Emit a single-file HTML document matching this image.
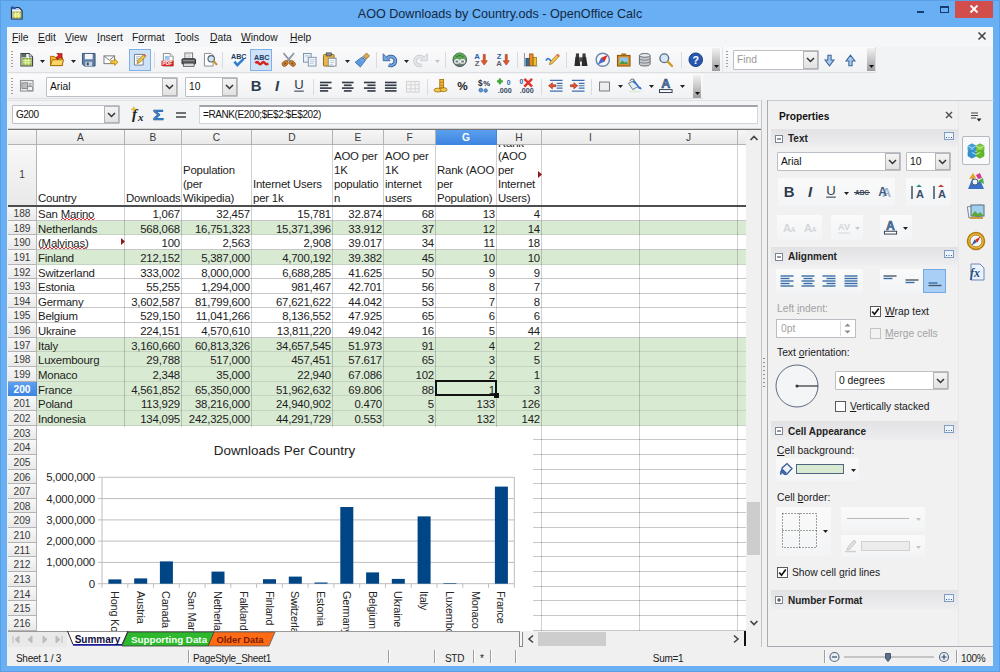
<!DOCTYPE html><html><head><meta charset="utf-8"><title>AOO Downloads by Country.ods - OpenOffice Calc</title><style>
*{box-sizing:border-box;margin:0;padding:0}
html,body{width:1000px;height:672px;overflow:hidden}
body{background:#68aff4;font-family:"Liberation Sans",sans-serif;font-size:12px;color:#000;position:relative}
.abs{position:absolute}
u{text-decoration:underline;text-underline-offset:1px}
#client{position:absolute;left:7px;top:27px;width:986px;height:639px;background:#f0f0f0}
.ui{font-family:"Liberation Sans",sans-serif;font-size:10.3px;color:#1a1a1a;white-space:nowrap}
.cell{position:absolute;font-family:"Liberation Sans",sans-serif;font-size:11.4px;line-height:15px;white-space:nowrap;color:#1c1c1c;letter-spacing:-0.2px}
.hdr{position:absolute;background:linear-gradient(#f8f8f8,#e9e9e9);border-right:1px solid #b4b4b4;border-bottom:1px solid #b4b4b4;font-size:10.2px;color:#3a3a3a;text-align:center;font-family:"Liberation Sans",sans-serif}
</style></head><body>
<div class="abs" style="left:0;top:0;width:1000px;height:26px;text-align:center;font-size:12.6px;line-height:28px;color:#14283f">AOO Downloads by Country.ods - OpenOffice Calc</div>
<div class="abs" style="left:955px;top:1px;width:38px;height:17px;background:#d24e4d"></div>
<svg class="abs" style="left:955px;top:0" width="38" height="18"><path d="M15.5 5.5l7 7M22.5 5.5l-7 7" stroke="#fff" stroke-width="1.8" fill="none"/></svg>
<div class="abs" style="left:940px;top:6px;width:9px;height:7px;border:1px solid #173a6e;border-top-width:2px"></div>
<div class="abs" style="left:917px;top:11px;width:7px;height:2px;background:#173a6e"></div>
<svg class="abs" style="left:10px;top:5px" width="14" height="15"><path d="M1.500 2.500h7.500l3 3v8.500h-10.500z" fill="#f4f6f8" stroke="#1f3048" stroke-width="1.200"/><rect x="3" y="7" width="8" height="6" fill="#d6dc4a" stroke="#5f7a1a" stroke-width=".6"/><path d="M3 9h8M3 11h8M5.600 7v6M8.300 7v6" stroke="#fbfbe0" stroke-width=".7"/><path d="M1.500 1l5 1.500-1 2-4-.5z" fill="#2a5fa5"/><path d="M6 4h3" stroke="#7fa6d8" stroke-width="1"/></svg>
<div class="abs" style="left:0;top:0;width:1000px;height:672px;border:1px solid #5a9ee6;pointer-events:none"></div>
<div id="client"></div>
<div class="abs" style="left:7px;top:27px;width:986px;height:20px;background:#f5f6f7"></div>
<div class="abs ui" style="left:12px;top:30px;line-height:15px"><u>F</u>ile</div>
<div class="abs ui" style="left:38px;top:30px;line-height:15px"><u>E</u>dit</div>
<div class="abs ui" style="left:65px;top:30px;line-height:15px"><u>V</u>iew</div>
<div class="abs ui" style="left:97px;top:30px;line-height:15px"><u>I</u>nsert</div>
<div class="abs ui" style="left:132px;top:30px;line-height:15px">F<u>o</u>rmat</div>
<div class="abs ui" style="left:175px;top:30px;line-height:15px"><u>T</u>ools</div>
<div class="abs ui" style="left:210px;top:30px;line-height:15px"><u>D</u>ata</div>
<div class="abs ui" style="left:241px;top:30px;line-height:15px"><u>W</u>indow</div>
<div class="abs ui" style="left:290px;top:30px;line-height:15px"><u>H</u>elp</div>
<svg class="abs" style="left:976px;top:30px" width="12" height="12"><path d="M2.5 2.5l7 7M9.5 2.5l-7 7" stroke="#444" stroke-width="1.6" fill="none"/></svg>
<div class="abs" style="left:7px;top:47px;width:986px;height:82px;background:#f2f3f5"></div>
<div class="abs" style="left:8px;top:47px;width:714px;height:26px;background:linear-gradient(#fbfbfc,#f1f2f4);border-bottom:1px solid #dcdee2"></div>
<div class="abs" style="left:722px;top:47px;width:154px;height:26px;background:linear-gradient(#fbfbfc,#f1f2f4);border-bottom:1px solid #dcdee2;border-right:1px solid #dcdee2;border-left:1px solid #e4e5e8"></div>
<div class="abs" style="left:8px;top:74px;width:695px;height:25px;background:linear-gradient(#fbfbfc,#f1f2f4);border-bottom:1px solid #dcdee2"></div>
<div class="abs" style="left:7px;top:100px;width:754px;height:29px;background:#f3f4f6;border-top:1px solid #e1e2e5"></div>
<div class="abs" style="left:11px;top:51px;width:2px;height:1px;background:#9aa0a8"></div><div class="abs" style="left:11px;top:54px;width:2px;height:1px;background:#9aa0a8"></div><div class="abs" style="left:11px;top:57px;width:2px;height:1px;background:#9aa0a8"></div><div class="abs" style="left:11px;top:60px;width:2px;height:1px;background:#9aa0a8"></div><div class="abs" style="left:11px;top:63px;width:2px;height:1px;background:#9aa0a8"></div><div class="abs" style="left:11px;top:66px;width:2px;height:1px;background:#9aa0a8"></div>
<svg class="abs" style="left:19.2px;top:52.2px" width="15.5" height="15.5" viewBox="0 0 16 16" ><path d="M2 1.500h8.500l3.500 3.500v9.500h-12z" fill="#fbfbf6" stroke="#3c4248" stroke-width="1.100"/><path d="M2.500 2h5v3.500h-5z" fill="#5a6a62"/><rect x="4" y="6.500" width="8.500" height="7" fill="#b5d84a" stroke="#56781c" stroke-width=".7"/><path d="M4 8.800h8.500M4 11.100h8.500M6.800 6.500v7M9.700 6.500v7" stroke="#f4fbe0" stroke-width=".7"/><path d="M10.500 1.500v3.500h3.500" fill="#d5d8da" stroke="#3c4248" stroke-width=".7"/></svg>
<svg class="abs" style="left:39.5px;top:59.5px" width="6" height="4"><path d="M0 0h5l-2.500 3z" fill="#222"/></svg>
<svg class="abs" style="left:49.2px;top:52.2px" width="15.5" height="15.5" viewBox="0 0 16 16" ><path d="M1.5 4.5h4l1.5 1.5h7v8h-12.5z" fill="#f2b52c" stroke="#a86e0c"/><path d="M1.5 14l2-6h11.5l-1.5 6z" fill="#fbd566" stroke="#a86e0c"/><path d="M8 1.5h5.5v5.5l-1.8-1.8-2.7 2.7-1.9-1.9 2.7-2.7z" fill="#d9231c" stroke="#8f0f0a" stroke-width=".6"/></svg>
<svg class="abs" style="left:70.5px;top:59.5px" width="6" height="4"><path d="M0 0h5l-2.500 3z" fill="#222"/></svg>
<svg class="abs" style="left:81.2px;top:52.2px" width="15.5" height="15.5" viewBox="0 0 16 16" ><path d="M1.5 1.5h13v13h-11l-2-2z" fill="#5f7fa6" stroke="#38557a"/><rect x="4" y="2" width="8" height="5.5" fill="#f4f6fa"/><rect x="4.5" y="10" width="7" height="4.5" fill="#c9d2e0"/><rect x="6" y="10.8" width="2" height="3" fill="#324a70"/></svg>
<svg class="abs" style="left:103.2px;top:52.2px" width="15.5" height="15.5" viewBox="0 0 16 16" ><rect x="1" y="4" width="11" height="8" fill="#fdfdfd" stroke="#7a7a7a"/><path d="M1 4l5.5 4.5L12 4" fill="none" stroke="#7a7a7a"/><path d="M8 9h4V7l3.5 3.5L12 14v-2H8z" fill="#f5c338" stroke="#a7780c" stroke-width=".7"/></svg>
<div class="abs" style="left:129px;top:49px;width:22px;height:22px;background:#cfe2f8;border:1px solid #7fb0e6"></div>
<svg class="abs" style="left:132.2px;top:52.2px" width="15.5" height="15.5" viewBox="0 0 16 16" ><path d="M2.5 2.5h9v11h-9z" fill="#fff" stroke="#6d7c90"/><path d="M4 5h5M4 7h4M4 9h3" stroke="#9fb0c8"/><path d="M12.5 2l2 2-6.5 7-2.8.9.8-2.9z" fill="#f7c640" stroke="#8a6914" stroke-width=".7"/><path d="M12.5 2l2 2-1 1-2-2z" fill="#e2574c"/></svg>
<div class="abs" style="left:154.0px;top:52px;width:1px;height:16px;background:#d9dbdf"></div>
<svg class="abs" style="left:160.2px;top:52.2px" width="15.5" height="15.5" viewBox="0 0 16 16" ><path d="M3.5 1.5h7l3 3v10h-10z" fill="#fff" stroke="#8a8a8a"/><rect x="5" y="4" width="5" height="4" fill="#9cc4e8"/><rect x="1.5" y="9" width="12.5" height="5.5" fill="#d8251f"/><text x="7.7" y="13.6" font-size="5" font-weight="bold" fill="#fff" text-anchor="middle" font-family="Liberation Sans, sans-serif">PDF</text><path d="M10.5 1.5v3h3" fill="#e9e9e9" stroke="#8a8a8a" stroke-width=".7"/></svg>
<svg class="abs" style="left:181.2px;top:52.2px" width="15.5" height="15.5" viewBox="0 0 16 16" ><rect x="4" y="1" width="8" height="6" fill="#fff" stroke="#777"/><path d="M5.5 3h5M5.5 5h5" stroke="#999" stroke-width=".7"/><rect x="1" y="7" width="14" height="5.5" rx="1" fill="#55585c" stroke="#2e3033"/><rect x="2.5" y="11.5" width="11" height="3.5" fill="#d9d9d9" stroke="#444" stroke-width=".7"/><rect x="2" y="8.2" width="12" height="1.3" fill="#8c8f93"/></svg>
<svg class="abs" style="left:202.2px;top:52.2px" width="15.5" height="15.5" viewBox="0 0 16 16" ><path d="M2.5 1.5h7l2 2v11h-9z" fill="#fff" stroke="#8a8a8a"/><circle cx="9.5" cy="7" r="3.3" fill="#cfe6fa" stroke="#55606b" stroke-width="1.2"/><path d="M12 9.5l3 3.2" stroke="#c58b1f" stroke-width="2" stroke-linecap="round"/></svg>
<div class="abs" style="left:222.0px;top:52px;width:1px;height:16px;background:#d9dbdf"></div>
<svg class="abs" style="left:231.2px;top:52.2px" width="15.5" height="15.5" viewBox="0 0 16 16" ><text x="8" y="6.8" font-size="7.4" font-weight="bold" fill="#1f3a60" text-anchor="middle" font-family="Liberation Sans, sans-serif">ABC</text><path d="M3.5 10l3 3.5 6.5-6.5" fill="none" stroke="#2f7fd0" stroke-width="2.6"/></svg>
<div class="abs" style="left:250px;top:49px;width:22px;height:22px;background:#cfe2f8;border:1px solid #7fb0e6"></div>
<svg class="abs" style="left:254.2px;top:52.2px" width="15.5" height="15.5" viewBox="0 0 16 16" ><text x="8" y="7.8" font-size="7.4" font-weight="bold" fill="#1f3a60" text-anchor="middle" font-family="Liberation Sans, sans-serif">ABC</text><path d="M1.5 11.5q1.800-2.500 3.300 0t3.200 0 3.200 0 3.300 0" fill="none" stroke="#d4221c" stroke-width="2.6"/></svg>
<svg class="abs" style="left:281.2px;top:52.2px" width="15.5" height="15.5" viewBox="0 0 16 16" ><path d="M2.500 1l7 8.500M13.500 1l-7 8.500" stroke="#8f99a4" stroke-width="1.900" fill="none"/><ellipse cx="4.300" cy="11.800" rx="3.500" ry="2.500" fill="#cf8530" stroke="#94591a" stroke-width=".8" transform="rotate(-40 4.300 11.800)"/><ellipse cx="11.700" cy="11.800" rx="3.500" ry="2.500" fill="#cf8530" stroke="#94591a" stroke-width=".8" transform="rotate(40 11.700 11.800)"/><ellipse cx="4.300" cy="12" rx="1.300" ry=".8" fill="#7a4a18" transform="rotate(-40 4.300 12)"/><ellipse cx="11.700" cy="12" rx="1.300" ry=".8" fill="#7a4a18" transform="rotate(40 11.700 12)"/></svg>
<svg class="abs" style="left:302.2px;top:52.2px" width="15.5" height="15.5" viewBox="0 0 16 16" ><rect x="1.5" y="1.5" width="8" height="9" fill="#e8f0f8" stroke="#7f94ad"/><rect x="6.5" y="5.5" width="8" height="9" fill="#f4f8fc" stroke="#7f94ad"/><path d="M8 8h5M8 10h5M8 12h4M3 4h5" stroke="#a9bbd1" stroke-width=".8"/></svg>
<svg class="abs" style="left:322.2px;top:52.2px" width="15.5" height="15.5" viewBox="0 0 16 16" ><rect x="1.5" y="2.5" width="11" height="12" rx="1" fill="#e9b64a" stroke="#946717"/><rect x="4.5" y="1" width="5" height="3" fill="#8e9399" stroke="#555"/><rect x="6.5" y="6.5" width="8" height="8" fill="#fff" stroke="#7f8d9c"/><path d="M8 9h5M8 11h5M8 13h3" stroke="#a9bbd1" stroke-width=".8"/></svg>
<svg class="abs" style="left:344.5px;top:59.5px" width="6" height="4"><path d="M0 0h5l-2.500 3z" fill="#222"/></svg>
<svg class="abs" style="left:355.2px;top:52.2px" width="15.5" height="15.5" viewBox="0 0 16 16" ><path d="M12 1l3 3-3.500 3.500-3-3z" fill="#d9a658" stroke="#8a5f1e" stroke-width=".7"/><path d="M8.500 4.500l3 3-1.300 1.300-3-3z" fill="#aab4c0" stroke="#5a6878" stroke-width=".6"/><path d="M7 5.500l3.500 3.500-5 6.500-5.300-5z" fill="#67a6ea" stroke="#2a5f9e" stroke-width=".8"/><path d="M2 12l3.500-3.500M3.500 13.500l3.500-3.500" stroke="#2f68ac" stroke-width=".7"/></svg>
<div class="abs" style="left:376.0px;top:52px;width:1px;height:16px;background:#d9dbdf"></div>
<svg class="abs" style="left:382.2px;top:52.2px" width="15.5" height="15.5" viewBox="0 0 16 16" ><path d="M5.500 6.500a4.600 4.600 0 1 1 1.500 6.800" stroke="#2a5590" stroke-width="3.800" fill="none"/><path d="M1.200 1.800v7.200h7.200z" fill="#72a6de" stroke="#2a5590" stroke-width=".8"/><path d="M5.500 6.500a4.600 4.600 0 1 1 1.500 6.800" stroke="#72a6de" stroke-width="2.300" fill="none"/></svg>
<svg class="abs" style="left:403.5px;top:59.5px" width="6" height="4"><path d="M0 0h5l-2.500 3z" fill="#222"/></svg>
<svg class="abs" style="left:413.2px;top:52.2px" width="15.5" height="15.5" viewBox="0 0 16 16" ><g transform="translate(16 0) scale(-1 1)"><path d="M5.500 6.500a4.600 4.600 0 1 1 1.500 6.800" stroke="#c3c8ce" stroke-width="3.800" fill="none"/><path d="M1.200 1.800v7.200h7.200z" fill="#e3e6ea" stroke="#c3c8ce" stroke-width=".8"/><path d="M5.500 6.500a4.600 4.600 0 1 1 1.500 6.800" stroke="#e3e6ea" stroke-width="2.300" fill="none"/></g></svg>
<svg class="abs" style="left:434.5px;top:59.5px" width="6" height="4"><path d="M0 0h5l-2.500 3z" fill="#c4c4c4"/></svg>
<div class="abs" style="left:445.0px;top:52px;width:1px;height:16px;background:#d9dbdf"></div>
<svg class="abs" style="left:451.8px;top:52.2px" width="15.5" height="15.5" viewBox="0 0 16 16" ><circle cx="8" cy="8" r="7" fill="#6d7f7c" stroke="#34443f" stroke-width=".9"/><path d="M1.300 7.500a6.700 6.700 0 0 1 13.400 0z" fill="#5ca653"/><path d="M4 5q4-3 8 0" stroke="#2f6a2c" stroke-width=".8" fill="none"/><rect x="2.800" y="8" width="4.800" height="3.600" rx="1.700" fill="none" stroke="#eef2f0" stroke-width="1.300"/><rect x="8.400" y="8" width="4.800" height="3.600" rx="1.700" fill="none" stroke="#eef2f0" stroke-width="1.300"/><path d="M6.500 9.800h3" stroke="#eef2f0" stroke-width="1.200"/></svg>
<svg class="abs" style="left:473.2px;top:52.2px" width="15.5" height="15.5" viewBox="0 0 16 16" ><text x="4.300" y="7.200" font-size="8" font-weight="bold" fill="#2b62ad" text-anchor="middle" font-family="Liberation Sans, sans-serif">A</text><text x="4.300" y="14.800" font-size="8" font-weight="bold" fill="#5a6068" text-anchor="middle" font-family="Liberation Sans, sans-serif">Z</text><path d="M10.600 2.500h2v6.500h2.100l-3.100 4.500-3.100-4.500h2.100z" fill="#e5582c" stroke="#a83a14" stroke-width=".7"/></svg>
<svg class="abs" style="left:495.2px;top:52.2px" width="15.5" height="15.5" viewBox="0 0 16 16" ><text x="4.300" y="7.200" font-size="8" font-weight="bold" fill="#2b62ad" text-anchor="middle" font-family="Liberation Sans, sans-serif">Z</text><text x="4.300" y="14.800" font-size="8" font-weight="bold" fill="#5a6068" text-anchor="middle" font-family="Liberation Sans, sans-serif">A</text><path d="M10.600 2.500h2v6.500h2.100l-3.100 4.500-3.100-4.500h2.100z" fill="#e5582c" stroke="#a83a14" stroke-width=".7"/></svg>
<div class="abs" style="left:517.0px;top:52px;width:1px;height:16px;background:#d9dbdf"></div>
<svg class="abs" style="left:523.2px;top:52.2px" width="15.5" height="15.5" viewBox="0 0 16 16" ><path d="M1.500 1v13.500h13.500" stroke="#8a929c" fill="none"/><rect x="3" y="6.500" width="3.600" height="7.500" fill="#2f6f9a" stroke="#173f5c" stroke-width=".7"/><rect x="6.800" y="2" width="3.600" height="12" fill="#f08a24" stroke="#8a4508" stroke-width=".7"/><rect x="10.600" y="5.500" width="3.400" height="8.500" fill="#efc42a" stroke="#8a6c0c" stroke-width=".7"/></svg>
<svg class="abs" style="left:544.8px;top:52.2px" width="15.5" height="15.5" viewBox="0 0 16 16" ><path d="M1 9q2-4 4-1t4 0" fill="none" stroke="#3f7fd0" stroke-width="1.800"/><path d="M13 2l2 2-7.500 8-3 1 1-3z" fill="#f4c04a" stroke="#9a6c16" stroke-width=".7"/><path d="M13 2l2 2-1.200 1.200-2-2z" fill="#e86a5a"/></svg>
<div class="abs" style="left:566.0px;top:52px;width:1px;height:16px;background:#d9dbdf"></div>
<svg class="abs" style="left:573.2px;top:52.2px" width="15.5" height="15.5" viewBox="0 0 16 16" ><path d="M2.500 5h4l1 9.500h-6z" fill="#2a2a2a"/><path d="M9.500 5h4l1.500 9.500h-6z" fill="#2a2a2a"/><rect x="3" y="1.500" width="3.200" height="4" fill="#3a3a3a"/><rect x="9.800" y="1.500" width="3.200" height="4" fill="#3a3a3a"/><rect x="6.500" y="5.500" width="3" height="4.500" fill="#4a4a4a"/></svg>
<svg class="abs" style="left:594.8px;top:52.2px" width="15.5" height="15.5" viewBox="0 0 16 16" ><circle cx="8" cy="8" r="6.800" fill="#f3f6fb" stroke="#7088b0" stroke-width="1.500"/><path d="M13 3l-3.200 7-3.800-3.800z" fill="#dc2a20"/><path d="M3 13l3.200-7 3.800 3.800z" fill="#3f6fc4"/></svg>
<svg class="abs" style="left:616.2px;top:52.2px" width="15.5" height="15.5" viewBox="0 0 16 16" ><rect x="1.500" y="3.500" width="13" height="11" fill="#d98a1e" stroke="#8a5208"/><rect x="3.500" y="5.500" width="9" height="7" fill="#8fc6ee"/><path d="M3.500 12.500l3-4 2.500 2.500 1.500-1.500 2 3z" fill="#4d9a3a"/><rect x="5.500" y="1.500" width="5" height="2" fill="#b0720f"/></svg>
<svg class="abs" style="left:637.2px;top:52.2px" width="15.5" height="15.5" viewBox="0 0 16 16" ><path d="M2.500 3.500v9q0 2 5.500 2t5.500-2v-9" fill="#c9cdd2" stroke="#62676d"/><ellipse cx="8" cy="3.500" rx="5.500" ry="2" fill="#e9ecef" stroke="#62676d"/><path d="M2.500 6.500q0 2 5.500 2t5.500-2M2.500 9.500q0 2 5.500 2t5.500-2" fill="none" stroke="#62676d" stroke-width=".8"/></svg>
<svg class="abs" style="left:658.2px;top:52.2px" width="15.5" height="15.5" viewBox="0 0 16 16" ><circle cx="6.500" cy="6.500" r="4.500" fill="#d4e8fa" stroke="#5a6f86" stroke-width="1.400"/><path d="M10 10l4.500 4.500" stroke="#d19a26" stroke-width="2.400" stroke-linecap="round"/></svg>
<div class="abs" style="left:680.5px;top:52px;width:1px;height:16px;background:#d9dbdf"></div>
<svg class="abs" style="left:687.8px;top:52.2px" width="15.5" height="15.5" viewBox="0 0 16 16" ><circle cx="8" cy="8" r="7" fill="#2758b0" stroke="#153a80"/><text x="8" y="12" font-size="11" font-weight="bold" fill="#fff" text-anchor="middle" font-family="Liberation Sans, sans-serif">?</text></svg>
<div class="abs" style="left:712px;top:48px;width:8px;height:23px;background:linear-gradient(#f2f2f2,#9d9d9d)"></div><svg class="abs" style="left:713.5px;top:65px" width="6" height="4"><path d="M0 0h5l-2.500 3z" fill="#111"/></svg>
<div class="abs" style="left:726px;top:51px;width:2px;height:1px;background:#9aa0a8"></div><div class="abs" style="left:726px;top:54px;width:2px;height:1px;background:#9aa0a8"></div><div class="abs" style="left:726px;top:57px;width:2px;height:1px;background:#9aa0a8"></div><div class="abs" style="left:726px;top:60px;width:2px;height:1px;background:#9aa0a8"></div><div class="abs" style="left:726px;top:63px;width:2px;height:1px;background:#9aa0a8"></div><div class="abs" style="left:726px;top:66px;width:2px;height:1px;background:#9aa0a8"></div>
<div class="abs" style="left:733px;top:50px;width:86px;height:20px;background:#fff;border:1px solid #bcbfc5;border-radius:1px"></div><div class="abs ui" style="left:737px;top:50px;line-height:20px;color:#9a9a9a;font-size:10.3px">Find</div><div class="abs" style="left:803px;top:51px;width:15px;height:18px;background:linear-gradient(#f4f4f4,#e2e2e2);border:1px solid #b4b4b4"></div><svg class="abs" style="left:806.0px;top:57.0px" width="9" height="6"><path d="M1 1l3.500 3.500L8 1" stroke="#333" stroke-width="1.500" fill="none"/></svg>
<svg class="abs" style="left:822.5px;top:53.5px" width="13" height="13" viewBox="0 0 16 16" ><path d="M6 1.500h4v6h3.500l-5.500 7-5.500-7h3.500z" fill="#a9c9ee" stroke="#3d6597" stroke-width="1.300"/></svg>
<svg class="abs" style="left:843.5px;top:53.5px" width="13" height="13" viewBox="0 0 16 16" ><path d="M6 14.500h4v-6h3.500l-5.500-7-5.500 7h3.500z" fill="#a9c9ee" stroke="#3d6597" stroke-width="1.300"/></svg>
<div class="abs" style="left:867px;top:48px;width:8px;height:23px;background:linear-gradient(#f2f2f2,#9d9d9d)"></div><svg class="abs" style="left:868.5px;top:65px" width="6" height="4"><path d="M0 0h5l-2.500 3z" fill="#111"/></svg>
<div class="abs" style="left:11px;top:78px;width:2px;height:1px;background:#9aa0a8"></div><div class="abs" style="left:11px;top:81px;width:2px;height:1px;background:#9aa0a8"></div><div class="abs" style="left:11px;top:84px;width:2px;height:1px;background:#9aa0a8"></div><div class="abs" style="left:11px;top:87px;width:2px;height:1px;background:#9aa0a8"></div><div class="abs" style="left:11px;top:90px;width:2px;height:1px;background:#9aa0a8"></div><div class="abs" style="left:11px;top:93px;width:2px;height:1px;background:#9aa0a8"></div>
<svg class="abs" style="left:19.2px;top:78.2px" width="15.5" height="15.5" viewBox="0 0 16 16" ><rect x="1.500" y="2.500" width="13" height="11" fill="#e8e8e8" stroke="#8a8a8a"/><rect x="3" y="5" width="6" height="6" fill="#b9bcc0" stroke="#6f7276" stroke-width=".7"/><path d="M10 6h3M10 8h3M10 10h3" stroke="#8a8a8a"/><rect x="9" y="9" width="5" height="4" fill="#f5f5f5" stroke="#777" stroke-width=".7"/></svg>
<div class="abs" style="left:46px;top:77px;width:132px;height:20px;background:#fff;border:1px solid #bcbfc5;border-radius:1px"></div><div class="abs ui" style="left:50px;top:77px;line-height:20px;color:#111;font-size:10.3px">Arial</div><div class="abs" style="left:162px;top:78px;width:15px;height:18px;background:linear-gradient(#f4f4f4,#e2e2e2);border:1px solid #b4b4b4"></div><svg class="abs" style="left:165.0px;top:84.0px" width="9" height="6"><path d="M1 1l3.500 3.500L8 1" stroke="#333" stroke-width="1.500" fill="none"/></svg>
<div class="abs" style="left:185px;top:77px;width:53px;height:20px;background:#fff;border:1px solid #bcbfc5;border-radius:1px"></div><div class="abs ui" style="left:189px;top:77px;line-height:20px;color:#111;font-size:10.3px">10</div><div class="abs" style="left:222px;top:78px;width:15px;height:18px;background:linear-gradient(#f4f4f4,#e2e2e2);border:1px solid #b4b4b4"></div><svg class="abs" style="left:225.0px;top:84.0px" width="9" height="6"><path d="M1 1l3.500 3.500L8 1" stroke="#333" stroke-width="1.500" fill="none"/></svg>
<svg class="abs" style="left:249.0px;top:78.2px" width="14" height="14" viewBox="0 0 16 16" ><text x="8" y="14.500" font-size="17" font-weight="bold" fill="#2d3b4e" text-anchor="middle" font-family="Liberation Sans, sans-serif">B</text></svg>
<svg class="abs" style="left:270.0px;top:78.2px" width="14" height="14" viewBox="0 0 16 16" ><text x="8" y="14.500" font-size="17" font-style="italic" font-weight="bold" fill="#2d3b4e" text-anchor="middle" font-family="Liberation Sans, sans-serif">I</text></svg>
<svg class="abs" style="left:292.0px;top:78.2px" width="14" height="14" viewBox="0 0 16 16" ><text x="8" y="12.500" font-size="15" fill="#2d3b4e" text-anchor="middle" font-family="Liberation Sans, sans-serif">U</text><path d="M2.500 15h11" stroke="#2d3b4e" stroke-width="1.200"/></svg>
<div class="abs" style="left:312.5px;top:79px;width:1px;height:16px;background:#d9dbdf"></div>
<svg class="abs" style="left:318.2px;top:79.0px" width="15.5" height="15.5" viewBox="0 0 16 16" ><path d="M2.0 3.6h12.0" stroke="#333b47" stroke-width="1.700"/><path d="M2.0 6.5h8.5" stroke="#333b47" stroke-width="1.700"/><path d="M2.0 9.4h12.0" stroke="#333b47" stroke-width="1.700"/><path d="M2.0 12.3h8.5" stroke="#333b47" stroke-width="1.700"/></svg>
<svg class="abs" style="left:340.2px;top:79.0px" width="15.5" height="15.5" viewBox="0 0 16 16" ><path d="M2.0 3.6h12.0" stroke="#333b47" stroke-width="1.700"/><path d="M4.0 6.5h8.0" stroke="#333b47" stroke-width="1.700"/><path d="M2.0 9.4h12.0" stroke="#333b47" stroke-width="1.700"/><path d="M4.0 12.3h8.0" stroke="#333b47" stroke-width="1.700"/></svg>
<svg class="abs" style="left:361.8px;top:79.0px" width="15.5" height="15.5" viewBox="0 0 16 16" ><path d="M2.0 3.6h12.0" stroke="#333b47" stroke-width="1.700"/><path d="M5.5 6.5h8.5" stroke="#333b47" stroke-width="1.700"/><path d="M2.0 9.4h12.0" stroke="#333b47" stroke-width="1.700"/><path d="M5.5 12.3h8.5" stroke="#333b47" stroke-width="1.700"/></svg>
<svg class="abs" style="left:383.2px;top:79.0px" width="15.5" height="15.5" viewBox="0 0 16 16" ><path d="M2.0 3.6h12.0" stroke="#333b47" stroke-width="1.700"/><path d="M2.0 6.5h12.0" stroke="#333b47" stroke-width="1.700"/><path d="M2.0 9.4h12.0" stroke="#333b47" stroke-width="1.700"/><path d="M2.0 12.3h12.0" stroke="#333b47" stroke-width="1.700"/></svg>
<svg class="abs" style="left:404.8px;top:78.8px" width="15.5" height="15.5" viewBox="0 0 16 16" ><rect x="1.500" y="2.500" width="13" height="11" fill="#f4f4f4" stroke="#cfcfcf"/><path d="M1.500 6h13M1.500 10h13M6 2.500v11M10.500 2.500v11" stroke="#d6d6d6"/></svg>
<div class="abs" style="left:427.0px;top:79px;width:1px;height:16px;background:#d9dbdf"></div>
<svg class="abs" style="left:433.2px;top:78.2px" width="15.5" height="15.5" viewBox="0 0 16 16" ><rect x="7" y="1.500" width="4" height="12" fill="#f2b632" stroke="#9a6a0c" stroke-width=".8"/><ellipse cx="5" cy="12.500" rx="4" ry="2" fill="#f6c84a" stroke="#9a6a0c" stroke-width=".8"/><ellipse cx="11" cy="12" rx="3.500" ry="2" fill="#f6c84a" stroke="#9a6a0c" stroke-width=".8"/><path d="M7 4.500h4M7 7.500h4M7 10h4" stroke="#9a6a0c" stroke-width=".6"/></svg>
<svg class="abs" style="left:455.5px;top:79.5px" width="13" height="13" viewBox="0 0 16 16" ><text x="8" y="12.200" font-size="14.500" font-weight="bold" fill="#1d1d1d" text-anchor="middle" font-family="Liberation Sans, sans-serif">%</text></svg>
<svg class="abs" style="left:476.2px;top:78.2px" width="15.5" height="15.5" viewBox="0 0 16 16" ><text x="4.500" y="8" font-size="8.500" font-weight="bold" fill="#1d2a3a" text-anchor="middle" font-family="Liberation Sans, sans-serif">$</text><text x="11" y="8.500" font-size="8" font-weight="bold" fill="#1d2a3a" text-anchor="middle" font-family="Liberation Sans, sans-serif">%</text><circle cx="5" cy="12.500" r="2" fill="#5b96d8" stroke="#2d5f9e" stroke-width=".7"/><circle cx="10" cy="13" r="1.800" fill="#5b96d8" stroke="#2d5f9e" stroke-width=".7"/></svg>
<svg class="abs" style="left:497.2px;top:78.2px" width="15.5" height="15.5" viewBox="0 0 16 16" ><path d="M3 .5v6M0 3.500h6" stroke="#3fa535" stroke-width="2.400"/><text x="12" y="7.500" font-size="7" font-weight="bold" fill="#2a5fa8" text-anchor="middle" font-family="Liberation Sans, sans-serif">0</text><text x="8" y="15.500" font-size="7.400" font-weight="bold" fill="#3a4a66" text-anchor="middle" font-family="Liberation Sans, sans-serif">.000</text></svg>
<svg class="abs" style="left:519.2px;top:78.2px" width="15.5" height="15.5" viewBox="0 0 16 16" ><path d="M5.500 1l8 8M13.500 1l-8 8" stroke="#e0352b" stroke-width="2.600"/><text x="2.500" y="6.500" font-size="7" font-weight="bold" fill="#2a5fa8" text-anchor="middle" font-family="Liberation Sans, sans-serif">0</text><text x="8" y="15.500" font-size="7.400" font-weight="bold" fill="#3a4a66" text-anchor="middle" font-family="Liberation Sans, sans-serif">.000</text></svg>
<div class="abs" style="left:541.0px;top:79px;width:1px;height:16px;background:#d9dbdf"></div>
<svg class="abs" style="left:547.8px;top:78.2px" width="15.5" height="15.5" viewBox="0 0 16 16" ><path d="M2 2.500h13M9 5.500h6M9 8h6M9 10.500h6M2 13.500h13" stroke="#3f6fb0" stroke-width="1.200"/><path d="M8 7h-3.500v-2.200l-4 3.200 4 3.200v-2.200h3.500z" fill="#e2552c" stroke="#8f2413" stroke-width=".6"/></svg>
<svg class="abs" style="left:569.8px;top:78.2px" width="15.5" height="15.5" viewBox="0 0 16 16" ><path d="M2 2.500h13M9 5.500h6M9 8h6M9 10.500h6M2 13.500h13" stroke="#3f6fb0" stroke-width="1.200"/><path d="M.5 7h3.500v-2.200l4 3.200-4 3.200v-2.200h-3.500z" fill="#e2552c" stroke="#8f2413" stroke-width=".6"/></svg>
<div class="abs" style="left:591.0px;top:79px;width:1px;height:16px;background:#d9dbdf"></div>
<svg class="abs" style="left:598.0px;top:79.5px" width="13" height="13" viewBox="0 0 16 16" ><rect x="2" y="2.500" width="12" height="11" fill="#eeeef2" stroke="#5a5f66" stroke-width="1"/></svg>
<svg class="abs" style="left:618.0px;top:84.5px" width="6" height="4"><path d="M0 0h5l-2.500 3z" fill="#222"/></svg>
<svg class="abs" style="left:626.8px;top:78.2px" width="15.5" height="15.5" viewBox="0 0 16 16" ><path d="M3 3q2-3.500 4.500-1" fill="none" stroke="#6a7480" stroke-width="1.100"/><path d="M1.500 5.500l6-3 4.500 6-6 3.500z" fill="#e6ebf0" stroke="#5b6b7d" stroke-width=".9"/><path d="M7.500 2.500l4.500 6q3 .5 3 3.500-1.500-1-3-1-1.500-4-6.500-7z" fill="#2f6fd0"/><rect x="2" y="13" width="12" height="2" fill="#dfeeda"/></svg>
<svg class="abs" style="left:648.5px;top:84.5px" width="6" height="4"><path d="M0 0h5l-2.500 3z" fill="#222"/></svg>
<svg class="abs" style="left:658.2px;top:78.2px" width="15.5" height="15.5" viewBox="0 0 16 16" ><text x="8" y="10.800" font-size="13" font-weight="bold" fill="#5582b8" stroke="#1f3b63" stroke-width=".55" text-anchor="middle" font-family="Liberation Sans, sans-serif">A</text><rect x="1.500" y="12" width="13" height="3" fill="#fff" stroke="#2a3a50" stroke-width="1"/></svg>
<svg class="abs" style="left:679.5px;top:84.5px" width="6" height="4"><path d="M0 0h5l-2.500 3z" fill="#222"/></svg>
<div class="abs" style="left:693px;top:75px;width:8px;height:23px;background:linear-gradient(#f2f2f2,#9d9d9d)"></div><svg class="abs" style="left:694.5px;top:92px" width="6" height="4"><path d="M0 0h5l-2.500 3z" fill="#111"/></svg>
<div class="abs" style="left:12px;top:105px;width:108px;height:19px;background:#fff;border:1px solid #bcbfc5;border-radius:1px"></div><div class="abs ui" style="left:16px;top:105px;line-height:19px;color:#111;font-size:10.3px"><span style="letter-spacing:-0.5px;font-size:10px">G200</span></div><div class="abs" style="left:104px;top:106px;width:15px;height:17px;background:linear-gradient(#f4f4f4,#e2e2e2);border:1px solid #b4b4b4"></div><svg class="abs" style="left:107.0px;top:111.5px" width="9" height="6"><path d="M1 1l3.500 3.500L8 1" stroke="#333" stroke-width="1.500" fill="none"/></svg>
<svg class="abs" style="left:129px;top:105px" width="18" height="18"><text x="3" y="14" font-size="15" font-style="italic" font-weight="bold" fill="#1f1f1f" font-family="Liberation Serif, serif">f</text><text x="9" y="15.500" font-size="11" font-style="italic" font-weight="bold" fill="#1f1f1f" font-family="Liberation Serif, serif">x</text><path d="M4.500 1.500l1 2 2 .5-2 1-.5 2-1-2-2-.5 2-1z" fill="#f2c230" stroke="#c99a10" stroke-width=".4"/></svg>
<svg class="abs" style="left:150px;top:106px" width="17" height="17"><text transform="translate(8.300 14) scale(1.250 1)" font-size="14.500" font-weight="bold" fill="#3a8fdc" stroke="#1c4a8c" stroke-width=".5" text-anchor="middle" font-family="Liberation Sans, sans-serif">Σ</text></svg>
<div class="abs" style="left:176px;top:112px;width:10px;height:2px;background:#707070"></div><div class="abs" style="left:176px;top:116px;width:10px;height:2px;background:#707070"></div>
<div class="abs" style="left:199px;top:105px;width:559px;height:19px;background:#fff;border:1px solid #d4d6da;border-top:2px solid #a2a3a8"></div>
<div class="abs ui" style="left:203px;top:107px;line-height:16px;color:#111;font-size:10px;letter-spacing:-0.4px">=RANK(E200;$E$2:$E$202)</div>
<div class="abs" style="left:8px;top:129px;width:738px;height:502px;background:#fff;overflow:hidden">
<div class="abs" style="left:29px;top:92px;width:709px;height:14px;background:#d9ead3"></div>
<div class="abs" style="left:29px;top:121px;width:709px;height:15px;background:#d9ead3"></div>
<div class="abs" style="left:29px;top:209px;width:709px;height:14px;background:#d9ead3"></div>
<div class="abs" style="left:29px;top:223px;width:709px;height:15px;background:#d9ead3"></div>
<div class="abs" style="left:29px;top:238px;width:709px;height:15px;background:#d9ead3"></div>
<div class="abs" style="left:29px;top:253px;width:709px;height:14px;background:#d9ead3"></div>
<div class="abs" style="left:29px;top:267px;width:709px;height:15px;background:#d9ead3"></div>
<div class="abs" style="left:29px;top:282px;width:709px;height:15px;background:#d9ead3"></div>
<div class="abs" style="left:29px;top:91px;width:709px;height:1px;background:rgba(0,0,0,0.22)"></div>
<div class="abs" style="left:29px;top:105px;width:709px;height:1px;background:rgba(0,0,0,0.09)"></div>
<div class="abs" style="left:29px;top:120px;width:709px;height:1px;background:rgba(0,0,0,0.22)"></div>
<div class="abs" style="left:29px;top:135px;width:709px;height:1px;background:rgba(0,0,0,0.09)"></div>
<div class="abs" style="left:29px;top:149px;width:709px;height:1px;background:rgba(0,0,0,0.22)"></div>
<div class="abs" style="left:29px;top:164px;width:709px;height:1px;background:rgba(0,0,0,0.22)"></div>
<div class="abs" style="left:29px;top:178px;width:709px;height:1px;background:rgba(0,0,0,0.22)"></div>
<div class="abs" style="left:29px;top:193px;width:709px;height:1px;background:rgba(0,0,0,0.22)"></div>
<div class="abs" style="left:29px;top:208px;width:709px;height:1px;background:rgba(0,0,0,0.22)"></div>
<div class="abs" style="left:29px;top:222px;width:709px;height:1px;background:rgba(0,0,0,0.09)"></div>
<div class="abs" style="left:29px;top:237px;width:709px;height:1px;background:rgba(0,0,0,0.09)"></div>
<div class="abs" style="left:29px;top:252px;width:709px;height:1px;background:rgba(0,0,0,0.09)"></div>
<div class="abs" style="left:29px;top:266px;width:709px;height:1px;background:rgba(0,0,0,0.09)"></div>
<div class="abs" style="left:29px;top:281px;width:709px;height:1px;background:rgba(0,0,0,0.09)"></div>
<div class="abs" style="left:29px;top:296px;width:709px;height:1px;background:rgba(0,0,0,0.09)"></div>
<div class="abs" style="left:29px;top:310px;width:709px;height:1px;background:rgba(0,0,0,0.22)"></div>
<div class="abs" style="left:29px;top:325px;width:709px;height:1px;background:rgba(0,0,0,0.22)"></div>
<div class="abs" style="left:29px;top:340px;width:709px;height:1px;background:rgba(0,0,0,0.22)"></div>
<div class="abs" style="left:29px;top:354px;width:709px;height:1px;background:rgba(0,0,0,0.22)"></div>
<div class="abs" style="left:29px;top:369px;width:709px;height:1px;background:rgba(0,0,0,0.22)"></div>
<div class="abs" style="left:29px;top:383px;width:709px;height:1px;background:rgba(0,0,0,0.22)"></div>
<div class="abs" style="left:29px;top:398px;width:709px;height:1px;background:rgba(0,0,0,0.22)"></div>
<div class="abs" style="left:29px;top:413px;width:709px;height:1px;background:rgba(0,0,0,0.22)"></div>
<div class="abs" style="left:29px;top:427px;width:709px;height:1px;background:rgba(0,0,0,0.22)"></div>
<div class="abs" style="left:29px;top:442px;width:709px;height:1px;background:rgba(0,0,0,0.22)"></div>
<div class="abs" style="left:29px;top:457px;width:709px;height:1px;background:rgba(0,0,0,0.22)"></div>
<div class="abs" style="left:29px;top:471px;width:709px;height:1px;background:rgba(0,0,0,0.22)"></div>
<div class="abs" style="left:29px;top:486px;width:709px;height:1px;background:rgba(0,0,0,0.22)"></div>
<div class="abs" style="left:29px;top:501px;width:709px;height:1px;background:rgba(0,0,0,0.22)"></div>
<div class="abs" style="left:116px;top:16px;width:1px;height:486px;background:rgba(0,0,0,0.18)"></div>
<div class="abs" style="left:173px;top:16px;width:1px;height:486px;background:rgba(0,0,0,0.18)"></div>
<div class="abs" style="left:243px;top:16px;width:1px;height:486px;background:rgba(0,0,0,0.18)"></div>
<div class="abs" style="left:324px;top:16px;width:1px;height:486px;background:rgba(0,0,0,0.18)"></div>
<div class="abs" style="left:375px;top:16px;width:1px;height:486px;background:rgba(0,0,0,0.18)"></div>
<div class="abs" style="left:427px;top:16px;width:1px;height:486px;background:rgba(0,0,0,0.18)"></div>
<div class="abs" style="left:488px;top:16px;width:1px;height:486px;background:rgba(0,0,0,0.18)"></div>
<div class="abs" style="left:533px;top:16px;width:1px;height:486px;background:rgba(0,0,0,0.18)"></div>
<div class="abs" style="left:631px;top:16px;width:1px;height:486px;background:rgba(0,0,0,0.18)"></div>
<div class="abs" style="left:729px;top:16px;width:1px;height:486px;background:rgba(0,0,0,0.18)"></div>
<div class="abs" style="left:0;top:0;width:738px;height:1px;background:#757575;z-index:3"></div>
<div class="hdr" style="left:0;top:0;width:29px;height:16px"></div>
<div class="hdr" style="left:29px;top:0;width:88px;height:16px;line-height:17px;">A</div>
<div class="hdr" style="left:117px;top:0;width:57px;height:16px;line-height:17px;">B</div>
<div class="hdr" style="left:174px;top:0;width:70px;height:16px;line-height:17px;">C</div>
<div class="hdr" style="left:244px;top:0;width:81px;height:16px;line-height:17px;">D</div>
<div class="hdr" style="left:325px;top:0;width:51px;height:16px;line-height:17px;">E</div>
<div class="hdr" style="left:376px;top:0;width:52px;height:16px;line-height:17px;">F</div>
<div class="hdr" style="left:428px;top:0;width:61px;height:16px;line-height:17px;background:linear-gradient(#5ea1f0,#3f86e2);color:#fff;font-weight:bold;border-color:#3f86e2;">G</div>
<div class="hdr" style="left:489px;top:0;width:45px;height:16px;line-height:17px;">H</div>
<div class="hdr" style="left:534px;top:0;width:98px;height:16px;line-height:17px;">I</div>
<div class="hdr" style="left:632px;top:0;width:98px;height:16px;line-height:17px;">J</div>
<div class="hdr" style="left:730px;top:0;width:8px;height:16px;border-right:none"></div>
<div class="hdr" style="left:0;top:16px;width:29px;height:61px;line-height:59px">1</div>
<div class="hdr" style="left:0;top:77px;width:29px;height:15px;line-height:16px;">188</div>
<div class="hdr" style="left:0;top:92px;width:29px;height:14px;line-height:15px;">189</div>
<div class="hdr" style="left:0;top:106px;width:29px;height:15px;line-height:16px;">190</div>
<div class="hdr" style="left:0;top:121px;width:29px;height:15px;line-height:16px;">191</div>
<div class="hdr" style="left:0;top:136px;width:29px;height:14px;line-height:15px;">192</div>
<div class="hdr" style="left:0;top:150px;width:29px;height:15px;line-height:16px;">193</div>
<div class="hdr" style="left:0;top:165px;width:29px;height:14px;line-height:15px;">194</div>
<div class="hdr" style="left:0;top:179px;width:29px;height:15px;line-height:16px;">195</div>
<div class="hdr" style="left:0;top:194px;width:29px;height:15px;line-height:16px;">196</div>
<div class="hdr" style="left:0;top:209px;width:29px;height:14px;line-height:15px;">197</div>
<div class="hdr" style="left:0;top:223px;width:29px;height:15px;line-height:16px;">198</div>
<div class="hdr" style="left:0;top:238px;width:29px;height:15px;line-height:16px;">199</div>
<div class="hdr" style="left:0;top:253px;width:29px;height:14px;line-height:15px;background:linear-gradient(#5ea1f0,#3f86e2);color:#fff;font-weight:bold;border-color:#3f86e2;">200</div>
<div class="hdr" style="left:0;top:267px;width:29px;height:15px;line-height:16px;">201</div>
<div class="hdr" style="left:0;top:282px;width:29px;height:15px;line-height:16px;">202</div>
<div class="hdr" style="left:0;top:297px;width:29px;height:14px;line-height:15px;">203</div>
<div class="hdr" style="left:0;top:311px;width:29px;height:15px;line-height:16px;">204</div>
<div class="hdr" style="left:0;top:326px;width:29px;height:15px;line-height:16px;">205</div>
<div class="hdr" style="left:0;top:341px;width:29px;height:14px;line-height:15px;">206</div>
<div class="hdr" style="left:0;top:355px;width:29px;height:15px;line-height:16px;">207</div>
<div class="hdr" style="left:0;top:370px;width:29px;height:14px;line-height:15px;">208</div>
<div class="hdr" style="left:0;top:384px;width:29px;height:15px;line-height:16px;">209</div>
<div class="hdr" style="left:0;top:399px;width:29px;height:15px;line-height:16px;">210</div>
<div class="hdr" style="left:0;top:414px;width:29px;height:14px;line-height:15px;">211</div>
<div class="hdr" style="left:0;top:428px;width:29px;height:15px;line-height:16px;">212</div>
<div class="hdr" style="left:0;top:443px;width:29px;height:15px;line-height:16px;">213</div>
<div class="hdr" style="left:0;top:458px;width:29px;height:14px;line-height:15px;">214</div>
<div class="hdr" style="left:0;top:472px;width:29px;height:15px;line-height:16px;">215</div>
<div class="hdr" style="left:0;top:487px;width:29px;height:15px;line-height:16px;">216</div>
<div class="abs" style="left:29px;top:16px;width:87px;height:60px;overflow:hidden">
<div class="cell" style="left:1px;bottom:-0.5px;line-height:13.8px">Country</div>
</div>
<div class="abs" style="left:117px;top:16px;width:56px;height:60px;overflow:hidden">
<div class="cell" style="left:1px;bottom:-0.5px;line-height:13.8px">Downloads</div>
</div>
<div class="abs" style="left:174px;top:16px;width:69px;height:60px;overflow:hidden">
<div class="cell" style="left:1px;bottom:-0.5px;line-height:13.8px">Population<br>(per<br>Wikipedia)</div>
</div>
<div class="abs" style="left:244px;top:16px;width:80px;height:60px;overflow:hidden">
<div class="cell" style="left:1px;bottom:-0.5px;line-height:13.8px">Internet Users<br>per 1k</div>
</div>
<div class="abs" style="left:325px;top:16px;width:50px;height:60px;overflow:hidden">
<div class="cell" style="left:1px;bottom:-0.5px;line-height:13.8px">AOO per<br>1K<br>populatio<br>n</div>
</div>
<div class="abs" style="left:376px;top:16px;width:51px;height:60px;overflow:hidden">
<div class="cell" style="left:1px;bottom:-0.5px;line-height:13.8px">AOO per<br>1K<br>internet<br>users</div>
</div>
<div class="abs" style="left:428px;top:16px;width:60px;height:60px;overflow:hidden">
<div class="cell" style="left:1px;bottom:-0.5px;line-height:13.8px">Rank (AOO<br>per<br>Population)</div>
</div>
<div class="abs" style="left:489px;top:16px;width:44px;height:60px;overflow:hidden">
<div class="cell" style="left:1px;bottom:-0.5px;line-height:13.8px">Rank<br>(AOO<br>per<br>Internet<br>Users)</div>
</div>
<div class="cell" style="left:30px;top:77.5px">San Marino</div>
<div class="cell" style="right:566px;top:77.5px">1,067</div>
<div class="cell" style="right:496px;top:77.5px">32,457</div>
<div class="cell" style="right:415px;top:77.5px">15,781</div>
<div class="cell" style="right:364px;top:77.5px">32.874</div>
<div class="cell" style="right:312px;top:77.5px">68</div>
<div class="cell" style="right:251px;top:77.5px">13</div>
<div class="cell" style="right:206px;top:77.5px">4</div>
<div class="cell" style="left:30px;top:92.5px">Netherlands</div>
<div class="cell" style="right:566px;top:92.5px">568,068</div>
<div class="cell" style="right:496px;top:92.5px">16,751,323</div>
<div class="cell" style="right:415px;top:92.5px">15,371,396</div>
<div class="cell" style="right:364px;top:92.5px">33.912</div>
<div class="cell" style="right:312px;top:92.5px">37</div>
<div class="cell" style="right:251px;top:92.5px">12</div>
<div class="cell" style="right:206px;top:92.5px">14</div>
<div class="cell" style="left:30px;top:106.5px">(Malvinas)</div>
<div class="cell" style="right:566px;top:106.5px">100</div>
<div class="cell" style="right:496px;top:106.5px">2,563</div>
<div class="cell" style="right:415px;top:106.5px">2,908</div>
<div class="cell" style="right:364px;top:106.5px">39.017</div>
<div class="cell" style="right:312px;top:106.5px">34</div>
<div class="cell" style="right:251px;top:106.5px">11</div>
<div class="cell" style="right:206px;top:106.5px">18</div>
<div class="cell" style="left:30px;top:121.5px">Finland</div>
<div class="cell" style="right:566px;top:121.5px">212,152</div>
<div class="cell" style="right:496px;top:121.5px">5,387,000</div>
<div class="cell" style="right:415px;top:121.5px">4,700,192</div>
<div class="cell" style="right:364px;top:121.5px">39.382</div>
<div class="cell" style="right:312px;top:121.5px">45</div>
<div class="cell" style="right:251px;top:121.5px">10</div>
<div class="cell" style="right:206px;top:121.5px">10</div>
<div class="cell" style="left:30px;top:136.5px">Switzerland</div>
<div class="cell" style="right:566px;top:136.5px">333,002</div>
<div class="cell" style="right:496px;top:136.5px">8,000,000</div>
<div class="cell" style="right:415px;top:136.5px">6,688,285</div>
<div class="cell" style="right:364px;top:136.5px">41.625</div>
<div class="cell" style="right:312px;top:136.5px">50</div>
<div class="cell" style="right:251px;top:136.5px">9</div>
<div class="cell" style="right:206px;top:136.5px">9</div>
<div class="cell" style="left:30px;top:150.5px">Estonia</div>
<div class="cell" style="right:566px;top:150.5px">55,255</div>
<div class="cell" style="right:496px;top:150.5px">1,294,000</div>
<div class="cell" style="right:415px;top:150.5px">981,467</div>
<div class="cell" style="right:364px;top:150.5px">42.701</div>
<div class="cell" style="right:312px;top:150.5px">56</div>
<div class="cell" style="right:251px;top:150.5px">8</div>
<div class="cell" style="right:206px;top:150.5px">7</div>
<div class="cell" style="left:30px;top:165.5px">Germany</div>
<div class="cell" style="right:566px;top:165.5px">3,602,587</div>
<div class="cell" style="right:496px;top:165.5px">81,799,600</div>
<div class="cell" style="right:415px;top:165.5px">67,621,622</div>
<div class="cell" style="right:364px;top:165.5px">44.042</div>
<div class="cell" style="right:312px;top:165.5px">53</div>
<div class="cell" style="right:251px;top:165.5px">7</div>
<div class="cell" style="right:206px;top:165.5px">8</div>
<div class="cell" style="left:30px;top:179.5px">Belgium</div>
<div class="cell" style="right:566px;top:179.5px">529,150</div>
<div class="cell" style="right:496px;top:179.5px">11,041,266</div>
<div class="cell" style="right:415px;top:179.5px">8,136,552</div>
<div class="cell" style="right:364px;top:179.5px">47.925</div>
<div class="cell" style="right:312px;top:179.5px">65</div>
<div class="cell" style="right:251px;top:179.5px">6</div>
<div class="cell" style="right:206px;top:179.5px">6</div>
<div class="cell" style="left:30px;top:194.5px">Ukraine</div>
<div class="cell" style="right:566px;top:194.5px">224,151</div>
<div class="cell" style="right:496px;top:194.5px">4,570,610</div>
<div class="cell" style="right:415px;top:194.5px">13,811,220</div>
<div class="cell" style="right:364px;top:194.5px">49.042</div>
<div class="cell" style="right:312px;top:194.5px">16</div>
<div class="cell" style="right:251px;top:194.5px">5</div>
<div class="cell" style="right:206px;top:194.5px">44</div>
<div class="cell" style="left:30px;top:209.5px">Italy</div>
<div class="cell" style="right:566px;top:209.5px">3,160,660</div>
<div class="cell" style="right:496px;top:209.5px">60,813,326</div>
<div class="cell" style="right:415px;top:209.5px">34,657,545</div>
<div class="cell" style="right:364px;top:209.5px">51.973</div>
<div class="cell" style="right:312px;top:209.5px">91</div>
<div class="cell" style="right:251px;top:209.5px">4</div>
<div class="cell" style="right:206px;top:209.5px">2</div>
<div class="cell" style="left:30px;top:223.5px">Luxembourg</div>
<div class="cell" style="right:566px;top:223.5px">29,788</div>
<div class="cell" style="right:496px;top:223.5px">517,000</div>
<div class="cell" style="right:415px;top:223.5px">457,451</div>
<div class="cell" style="right:364px;top:223.5px">57.617</div>
<div class="cell" style="right:312px;top:223.5px">65</div>
<div class="cell" style="right:251px;top:223.5px">3</div>
<div class="cell" style="right:206px;top:223.5px">5</div>
<div class="cell" style="left:30px;top:238.5px">Monaco</div>
<div class="cell" style="right:566px;top:238.5px">2,348</div>
<div class="cell" style="right:496px;top:238.5px">35,000</div>
<div class="cell" style="right:415px;top:238.5px">22,940</div>
<div class="cell" style="right:364px;top:238.5px">67.086</div>
<div class="cell" style="right:312px;top:238.5px">102</div>
<div class="cell" style="right:251px;top:238.5px">2</div>
<div class="cell" style="right:206px;top:238.5px">1</div>
<div class="cell" style="left:30px;top:253.5px">France</div>
<div class="cell" style="right:566px;top:253.5px">4,561,852</div>
<div class="cell" style="right:496px;top:253.5px">65,350,000</div>
<div class="cell" style="right:415px;top:253.5px">51,962,632</div>
<div class="cell" style="right:364px;top:253.5px">69.806</div>
<div class="cell" style="right:312px;top:253.5px">88</div>
<div class="cell" style="right:251px;top:253.5px">1</div>
<div class="cell" style="right:206px;top:253.5px">3</div>
<div class="cell" style="left:30px;top:267.5px">Poland</div>
<div class="cell" style="right:566px;top:267.5px">113,929</div>
<div class="cell" style="right:496px;top:267.5px">38,216,000</div>
<div class="cell" style="right:415px;top:267.5px">24,940,902</div>
<div class="cell" style="right:364px;top:267.5px">0.470</div>
<div class="cell" style="right:312px;top:267.5px">5</div>
<div class="cell" style="right:251px;top:267.5px">133</div>
<div class="cell" style="right:206px;top:267.5px">126</div>
<div class="cell" style="left:30px;top:282.5px">Indonesia</div>
<div class="cell" style="right:566px;top:282.5px">134,095</div>
<div class="cell" style="right:496px;top:282.5px">242,325,000</div>
<div class="cell" style="right:415px;top:282.5px">44,291,729</div>
<div class="cell" style="right:364px;top:282.5px">0.553</div>
<div class="cell" style="right:312px;top:282.5px">3</div>
<div class="cell" style="right:251px;top:282.5px">132</div>
<div class="cell" style="right:206px;top:282.5px">142</div>
<div class="abs" style="left:0;top:76px;width:738px;height:2px;background:#4d4d4d"></div>
<div class="abs" style="left:427px;top:251px;width:62px;height:16px;border:2px solid #111"></div>
<div class="abs" style="left:486px;top:264px;width:5px;height:5px;background:#111"></div>
<svg class="abs" style="left:113px;top:109px" width="5" height="8"><path d="M0 0l4 3.5-4 3.5z" fill="#8b1a1a"/></svg>
<svg class="abs" style="left:530px;top:42px" width="5" height="8"><path d="M0 0l4 3.5-4 3.5z" fill="#8b1a1a"/></svg>
<svg class="abs" style="left:53px;top:89px" width="35" height="3"><path d="M0 2 L2 0 L4 2 L6 0 L8 2 L10 0 L12 2 L14 0 L16 2 L18 0 L20 2 L22 0 L24 2 L26 0 L28 2 L30 0 L32 2 L34 0" stroke="#e03030" stroke-width="1" fill="none"/></svg>
<svg class="abs" style="left:32px;top:118px" width="47" height="3"><path d="M0 2 L2 0 L4 2 L6 0 L8 2 L10 0 L12 2 L14 0 L16 2 L18 0 L20 2 L22 0 L24 2 L26 0 L28 2 L30 0 L32 2 L34 0 L36 2 L38 0 L40 2 L42 0 L44 2 L46 0" stroke="#e03030" stroke-width="1" fill="none"/></svg>
</div>
<div class="abs" style="left:746px;top:129px;width:15px;height:502px;background:#f0f0f0"></div>
<div class="abs" style="left:747px;top:502px;width:13px;height:53px;background:#cdcdcd"></div>
<div class="abs" style="left:746px;top:129px;width:16px;height:1px;background:#757575"></div>
<div class="abs" style="left:8px;top:128px;width:754px;height:1px;background:rgba(0,0,0,0.13)"></div>
<svg class="abs" style="left:749px;top:134px" width="10" height="8"><path d="M1.5 6l3.5-3.5 3.5 3.5" stroke="#454545" stroke-width="1.7" fill="none"/></svg>
<svg class="abs" style="left:749px;top:619px" width="10" height="8"><path d="M1.5 2l3.5 3.5 3.5-3.500" stroke="#454545" stroke-width="1.7" fill="none"/></svg>
<div class="abs" style="left:37px;top:427px;width:496px;height:204px;background:#fff;overflow:hidden">
<svg class="abs" style="left:0;top:0" width="496" height="224" font-family="Liberation Sans, sans-serif">
<path d="M61.0 156.7H477.3" stroke="#bdbdbd" stroke-width="1"/>
<path d="M61.0 135.4H477.3" stroke="#bdbdbd" stroke-width="1"/>
<path d="M61.0 114.1H477.3" stroke="#bdbdbd" stroke-width="1"/>
<path d="M61.0 92.9H477.3" stroke="#bdbdbd" stroke-width="1"/>
<path d="M61.0 71.6H477.3" stroke="#bdbdbd" stroke-width="1"/>
<path d="M61.0 50.3H477.3" stroke="#bdbdbd" stroke-width="1"/>
<path d="M65.0 50.3V160.7" stroke="#bdbdbd" stroke-width="1" fill="none"/>
<path d="M477.3 50.3V156.7" stroke="#bdbdbd" stroke-width="1" fill="none"/>
<path d="M90.8 156.7v4" stroke="#bdbdbd" stroke-width="1"/>
<path d="M116.5 156.7v4" stroke="#bdbdbd" stroke-width="1"/>
<path d="M142.3 156.7v4" stroke="#bdbdbd" stroke-width="1"/>
<path d="M168.1 156.7v4" stroke="#bdbdbd" stroke-width="1"/>
<path d="M193.8 156.7v4" stroke="#bdbdbd" stroke-width="1"/>
<path d="M219.6 156.7v4" stroke="#bdbdbd" stroke-width="1"/>
<path d="M245.4 156.7v4" stroke="#bdbdbd" stroke-width="1"/>
<path d="M271.1 156.7v4" stroke="#bdbdbd" stroke-width="1"/>
<path d="M296.9 156.7v4" stroke="#bdbdbd" stroke-width="1"/>
<path d="M322.7 156.7v4" stroke="#bdbdbd" stroke-width="1"/>
<path d="M348.5 156.7v4" stroke="#bdbdbd" stroke-width="1"/>
<path d="M374.2 156.7v4" stroke="#bdbdbd" stroke-width="1"/>
<path d="M400.0 156.7v4" stroke="#bdbdbd" stroke-width="1"/>
<path d="M425.8 156.7v4" stroke="#bdbdbd" stroke-width="1"/>
<path d="M451.5 156.7v4" stroke="#bdbdbd" stroke-width="1"/>
<path d="M477.3 156.7v4" stroke="#bdbdbd" stroke-width="1"/>
<rect x="71.4" y="152.4" width="13" height="4.3" fill="#004586"/>
<rect x="97.2" y="151.4" width="13" height="5.3" fill="#004586"/>
<rect x="122.9" y="134.4" width="13" height="22.3" fill="#004586"/>
<rect x="174.5" y="144.6" width="13" height="12.1" fill="#004586"/>
<rect x="226.0" y="152.2" width="13" height="4.5" fill="#004586"/>
<rect x="251.8" y="149.6" width="13" height="7.1" fill="#004586"/>
<rect x="277.5" y="155.5" width="13" height="1.2" fill="#004586"/>
<rect x="303.3" y="80.0" width="13" height="76.7" fill="#004586"/>
<rect x="329.1" y="145.4" width="13" height="11.3" fill="#004586"/>
<rect x="354.8" y="151.9" width="13" height="4.8" fill="#004586"/>
<rect x="380.6" y="89.4" width="13" height="67.3" fill="#004586"/>
<rect x="406.4" y="156.1" width="13" height="0.6" fill="#004586"/>
<rect x="457.9" y="59.6" width="13" height="97.1" fill="#004586"/>
<text x="58.0" y="160.7" font-size="11.4" text-anchor="end" letter-spacing="-0.2" fill="#262626">0</text>
<text x="58.0" y="139.4" font-size="11.4" text-anchor="end" letter-spacing="-0.2" fill="#262626">1,000,000</text>
<text x="58.0" y="118.1" font-size="11.4" text-anchor="end" letter-spacing="-0.2" fill="#262626">2,000,000</text>
<text x="58.0" y="96.9" font-size="11.4" text-anchor="end" letter-spacing="-0.2" fill="#262626">3,000,000</text>
<text x="58.0" y="75.6" font-size="11.4" text-anchor="end" letter-spacing="-0.2" fill="#262626">4,000,000</text>
<text x="58.0" y="54.3" font-size="11.4" text-anchor="end" letter-spacing="-0.2" fill="#262626">5,000,000</text>
<text transform="translate(73.9 164.0) rotate(90)" font-size="10.9" letter-spacing="-0.2" fill="#262626">Hong Ko</text>
<text transform="translate(99.7 164.0) rotate(90)" font-size="10.9" letter-spacing="-0.2" fill="#262626">Austria</text>
<text transform="translate(125.4 164.0) rotate(90)" font-size="10.9" letter-spacing="-0.2" fill="#262626">Canada</text>
<text transform="translate(151.2 164.0) rotate(90)" font-size="10.9" letter-spacing="-0.2" fill="#262626">San Mar</text>
<text transform="translate(177.0 164.0) rotate(90)" font-size="10.9" letter-spacing="-0.2" fill="#262626">Netherla</text>
<text transform="translate(202.7 164.0) rotate(90)" font-size="10.9" letter-spacing="-0.2" fill="#262626">Falkland</text>
<text transform="translate(228.5 164.0) rotate(90)" font-size="10.9" letter-spacing="-0.2" fill="#262626">Finland</text>
<text transform="translate(254.3 164.0) rotate(90)" font-size="10.9" letter-spacing="-0.2" fill="#262626">Switzerla</text>
<text transform="translate(280.0 164.0) rotate(90)" font-size="10.9" letter-spacing="-0.2" fill="#262626">Estonia</text>
<text transform="translate(305.8 164.0) rotate(90)" font-size="10.9" letter-spacing="-0.2" fill="#262626">Germany</text>
<text transform="translate(331.6 164.0) rotate(90)" font-size="10.9" letter-spacing="-0.2" fill="#262626">Belgium</text>
<text transform="translate(357.3 164.0) rotate(90)" font-size="10.9" letter-spacing="-0.2" fill="#262626">Ukraine</text>
<text transform="translate(383.1 164.0) rotate(90)" font-size="10.9" letter-spacing="-0.2" fill="#262626">Italy</text>
<text transform="translate(408.9 164.0) rotate(90)" font-size="10.9" letter-spacing="-0.2" fill="#262626">Luxembo</text>
<text transform="translate(434.6 164.0) rotate(90)" font-size="10.9" letter-spacing="-0.2" fill="#262626">Monaco</text>
<text transform="translate(460.4 164.0) rotate(90)" font-size="10.9" letter-spacing="-0.2" fill="#262626">France</text>
<text x="247.5" y="28.0" font-size="13.4" text-anchor="middle" fill="#222">Downloads Per Country</text>
</svg></div>
<div class="abs" style="left:761px;top:100px;width:232px;height:547px;background:#f0f0f0"></div>
<div class="abs" style="left:761px;top:100px;width:1px;height:547px;background:#c2c4c9"></div>
<div class="abs" style="left:767px;top:100px;width:1px;height:547px;background:#a9acb2"></div>
<div class="abs" style="left:768px;top:100px;width:190px;height:547px;background:#f1f1f2"></div>
<div class="abs" style="left:768px;top:100px;width:226px;height:1px;background:#c9ccd1"></div>
<div class="abs" style="left:958px;top:101px;width:1px;height:545px;background:#e8e8ea"></div>
<div class="abs" style="left:763px;top:358px;width:2px;height:1px;background:#8a8f98"></div>
<div class="abs" style="left:763px;top:362px;width:2px;height:1px;background:#8a8f98"></div>
<div class="abs" style="left:763px;top:366px;width:2px;height:1px;background:#8a8f98"></div>
<div class="abs" style="left:763px;top:370px;width:2px;height:1px;background:#8a8f98"></div>
<div class="abs" style="left:763px;top:374px;width:2px;height:1px;background:#8a8f98"></div>
<div class="abs" style="left:763px;top:378px;width:2px;height:1px;background:#8a8f98"></div>
<div class="abs" style="left:763px;top:382px;width:2px;height:1px;background:#8a8f98"></div>
<div class="abs" style="left:763px;top:386px;width:2px;height:1px;background:#8a8f98"></div>
<div class="abs" style="left:767px;top:646px;width:226px;height:1px;background:#a9acb2"></div>
<div class="abs ui" style="left:779px;top:110.0px;line-height:14px;color:#111;font-size:10.2px;font-weight:bold;">Properties</div>
<svg class="abs" style="left:944px;top:110px" width="10" height="10"><path d="M2 2l6 6M8 2l-6 6" stroke="#555" stroke-width="1.500" fill="none"/></svg>
<div class="abs" style="left:771px;top:129px;width:187px;height:18px;background:linear-gradient(#e2e2e4,#eeeef0)"></div><svg class="abs" style="left:775px;top:134.5px" width="9" height="9"><rect x=".5" y=".5" width="7" height="7" fill="#fff" stroke="#7b8694"/><path d="M2 4h4" stroke="#333"/></svg><div class="abs ui" style="left:788px;top:132.0px;line-height:14px;font-weight:bold;font-size:10px;color:#222">Text</div><svg class="abs" style="left:944px;top:132.0px" width="11" height="9"><rect x=".5" y=".5" width="9" height="7" fill="#eef3fa" stroke="#7f9cc4"/><path d="M2 5.500h1M4.500 5.500h1M7 5.500h1" stroke="#3c5f94"/></svg>
<div class="abs" style="left:777px;top:152px;width:124px;height:19px;background:#fff;border:1px solid #bcbfc5;border-radius:1px"></div><div class="abs ui" style="left:781px;top:152px;line-height:19px;color:#111;font-size:10.3px">Arial</div><div class="abs" style="left:885px;top:153px;width:15px;height:17px;background:linear-gradient(#f4f4f4,#e2e2e2);border:1px solid #b4b4b4"></div><svg class="abs" style="left:888.0px;top:158.5px" width="9" height="6"><path d="M1 1l3.500 3.500L8 1" stroke="#333" stroke-width="1.500" fill="none"/></svg>
<div class="abs" style="left:906px;top:152px;width:45px;height:19px;background:#fff;border:1px solid #bcbfc5;border-radius:1px"></div><div class="abs ui" style="left:910px;top:152px;line-height:19px;color:#111;font-size:10.3px">10</div><div class="abs" style="left:935px;top:153px;width:15px;height:17px;background:linear-gradient(#f4f4f4,#e2e2e2);border:1px solid #b4b4b4"></div><svg class="abs" style="left:938.0px;top:158.5px" width="9" height="6"><path d="M1 1l3.500 3.500L8 1" stroke="#333" stroke-width="1.500" fill="none"/></svg>
<div class="abs" style="left:778px;top:178px;width:117px;height:28px;background:linear-gradient(#fafafb,#f3f4f5);border-radius:1px"></div>
<div class="abs" style="left:906px;top:178px;width:45px;height:28px;background:linear-gradient(#fafafb,#f3f4f5);border-radius:1px"></div>
<svg class="abs" style="left:782.0px;top:184.2px" width="14" height="14" viewBox="0 0 16 16" ><text x="8" y="14.500" font-size="17" font-weight="bold" fill="#2d3b4e" text-anchor="middle" font-family="Liberation Sans, sans-serif">B</text></svg>
<svg class="abs" style="left:803.0px;top:184.2px" width="14" height="14" viewBox="0 0 16 16" ><text x="8" y="14.500" font-size="17" font-style="italic" font-weight="bold" fill="#2d3b4e" text-anchor="middle" font-family="Liberation Sans, sans-serif">I</text></svg>
<svg class="abs" style="left:824.0px;top:184.2px" width="14" height="14" viewBox="0 0 16 16" ><text x="8" y="12.500" font-size="15" fill="#2d3b4e" text-anchor="middle" font-family="Liberation Sans, sans-serif">U</text><path d="M2.500 15h11" stroke="#2d3b4e" stroke-width="1.200"/></svg>
<svg class="abs" style="left:843.5px;top:191.5px" width="6" height="4"><path d="M0 0h5l-2.500 3z" fill="#222"/></svg>
<svg class="abs" style="left:853px;top:186px" width="18" height="12"><text x="9" y="9" font-size="6.500" font-weight="bold" fill="#3a4656" text-anchor="middle" font-family="Liberation Sans, sans-serif">ABC</text><path d="M1 6.500h16" stroke="#3a4656" stroke-width="1"/></svg>
<svg class="abs" style="left:876px;top:184px" width="17" height="16"><text x="10.500" y="13" font-size="12" font-weight="bold" fill="#9fb0c4" text-anchor="middle" font-family="Liberation Sans, sans-serif">A</text><text x="6.500" y="12" font-size="12" font-weight="bold" fill="#3f5f86" text-anchor="middle" font-family="Liberation Sans, sans-serif">A</text></svg>
<svg class="abs" style="left:910px;top:184px" width="16" height="16"><path d="M2 2v13" stroke="#4a5a6c" stroke-width="1.600"/><text x="10" y="14" font-size="11" font-weight="bold" fill="#3a4f6c" text-anchor="middle" font-family="Liberation Sans, sans-serif">A</text><path d="M6 3l3-2.500 3 2.500z" fill="#2a8a7a"/></svg>
<svg class="abs" style="left:932px;top:184px" width="16" height="16"><path d="M2 2v13" stroke="#4a5a6c" stroke-width="1.600"/><text x="10" y="14" font-size="11" font-weight="bold" fill="#3a4f6c" text-anchor="middle" font-family="Liberation Sans, sans-serif">A</text><path d="M6 3l3-2.500 3 2.500z" fill="#c03a30"/></svg>
<div class="abs" style="left:777px;top:215px;width:45px;height:25px;background:linear-gradient(#fafafb,#f3f4f5);border-radius:1px"></div>
<div class="abs" style="left:831px;top:215px;width:32px;height:25px;background:linear-gradient(#fafafb,#f3f4f5);border-radius:1px"></div>
<div class="abs" style="left:880px;top:215px;width:32px;height:25px;background:linear-gradient(#fafafb,#f3f4f5);border-radius:1px"></div>
<svg class="abs" style="left:781px;top:219px" width="16" height="16"><text x="6" y="13" font-size="11" font-weight="bold" fill="#d3d6da" text-anchor="middle" font-family="Liberation Sans, sans-serif">A</text><text x="12" y="13" font-size="7" font-weight="bold" fill="#d3d6da" text-anchor="middle" font-family="Liberation Sans, sans-serif">A</text></svg>
<svg class="abs" style="left:802px;top:219px" width="16" height="16"><text x="6" y="13" font-size="11" font-weight="bold" fill="#d3d6da" text-anchor="middle" font-family="Liberation Sans, sans-serif">A</text><text x="12" y="13" font-size="7" font-weight="bold" fill="#d3d6da" text-anchor="middle" font-family="Liberation Sans, sans-serif">A</text></svg>
<svg class="abs" style="left:836px;top:219px" width="16" height="16"><text x="8" y="11" font-size="9" font-weight="bold" fill="#d3d6da" text-anchor="middle" font-family="Liberation Sans, sans-serif">AV</text><path d="M2 14h12" stroke="#d3d6da"/></svg>
<svg class="abs" style="left:854.5px;top:226.5px" width="6" height="4"><path d="M0 0h5l-2.500 3z" fill="#c8c8c8"/></svg>
<svg class="abs" style="left:882.5px;top:219.5px" width="15" height="15" viewBox="0 0 16 16" ><text x="8" y="10.800" font-size="13" font-weight="bold" fill="#5582b8" stroke="#1f3b63" stroke-width=".55" text-anchor="middle" font-family="Liberation Sans, sans-serif">A</text><rect x="1.500" y="12" width="13" height="3" fill="#fff" stroke="#2a3a50" stroke-width="1"/></svg>
<svg class="abs" style="left:902.5px;top:226.5px" width="6" height="4"><path d="M0 0h5l-2.500 3z" fill="#222"/></svg>
<div class="abs" style="left:771px;top:247px;width:187px;height:18px;background:linear-gradient(#e2e2e4,#eeeef0)"></div><svg class="abs" style="left:775px;top:252.5px" width="9" height="9"><rect x=".5" y=".5" width="7" height="7" fill="#fff" stroke="#7b8694"/><path d="M2 4h4" stroke="#333"/></svg><div class="abs ui" style="left:788px;top:250.0px;line-height:14px;font-weight:bold;font-size:10px;color:#222">Alignment</div><svg class="abs" style="left:944px;top:250.0px" width="11" height="9"><rect x=".5" y=".5" width="9" height="7" fill="#eef3fa" stroke="#7f9cc4"/><path d="M2 5.500h1M4.500 5.500h1M7 5.500h1" stroke="#3c5f94"/></svg>
<div class="abs" style="left:776px;top:269px;width:87px;height:24px;background:linear-gradient(#fafafb,#f3f4f5);border-radius:1px"></div>
<div class="abs" style="left:880px;top:269px;width:66px;height:24px;background:linear-gradient(#fafafb,#f3f4f5);border-radius:1px"></div>
<div class="abs" style="left:923px;top:269px;width:23px;height:24px;background:#a9cff6;border:1px solid #73aae4"></div>
<svg class="abs" style="left:779px;top:274px" width="16" height="14"><path d="M1.5 2.0h13.0" stroke="#3b6ea8" stroke-width="1.400"/><path d="M1.5 4.5h9.0" stroke="#3b6ea8" stroke-width="1.400"/><path d="M1.5 7.0h13.0" stroke="#3b6ea8" stroke-width="1.400"/><path d="M1.5 9.5h9.0" stroke="#3b6ea8" stroke-width="1.400"/><path d="M1.5 12.0h13.0" stroke="#3b6ea8" stroke-width="1.400"/></svg>
<svg class="abs" style="left:800px;top:274px" width="16" height="14"><path d="M1.5 2.0h13.0" stroke="#3b6ea8" stroke-width="1.400"/><path d="M3.5 4.5h9.0" stroke="#3b6ea8" stroke-width="1.400"/><path d="M1.5 7.0h13.0" stroke="#3b6ea8" stroke-width="1.400"/><path d="M3.5 9.5h9.0" stroke="#3b6ea8" stroke-width="1.400"/><path d="M1.5 12.0h13.0" stroke="#3b6ea8" stroke-width="1.400"/></svg>
<svg class="abs" style="left:821px;top:274px" width="16" height="14"><path d="M1.5 2.0h13.0" stroke="#3b6ea8" stroke-width="1.400"/><path d="M5.5 4.5h9.0" stroke="#3b6ea8" stroke-width="1.400"/><path d="M1.5 7.0h13.0" stroke="#3b6ea8" stroke-width="1.400"/><path d="M5.5 9.5h9.0" stroke="#3b6ea8" stroke-width="1.400"/><path d="M1.5 12.0h13.0" stroke="#3b6ea8" stroke-width="1.400"/></svg>
<svg class="abs" style="left:843px;top:274px" width="16" height="14"><path d="M1.5 2.0h13.0" stroke="#3b6ea8" stroke-width="1.400"/><path d="M1.5 4.5h13.0" stroke="#3b6ea8" stroke-width="1.400"/><path d="M1.5 7.0h13.0" stroke="#3b6ea8" stroke-width="1.400"/><path d="M1.5 9.5h13.0" stroke="#3b6ea8" stroke-width="1.400"/><path d="M1.5 12.0h13.0" stroke="#3b6ea8" stroke-width="1.400"/></svg>
<svg class="abs" style="left:882px;top:274px" width="16" height="14"><path d="M1.500 2h13" stroke="#4a5868" stroke-width="1.400"/><path d="M1.500 4.500h9" stroke="#3b6ea8" stroke-width="1.400"/></svg>
<svg class="abs" style="left:904px;top:274px" width="16" height="14"><path d="M1.500 6h13" stroke="#4a5868" stroke-width="1.400"/><path d="M1.500 8.500h9" stroke="#3b6ea8" stroke-width="1.400"/></svg>
<svg class="abs" style="left:927px;top:274px" width="16" height="14"><path d="M1.500 9h9" stroke="#3b6ea8" stroke-width="1.400"/><path d="M1.500 11.500h13" stroke="#4a5868" stroke-width="1.400"/></svg>
<div class="abs ui" style="left:777px;top:302.0px;line-height:14px;color:#a3a3a3;font-size:10.3px;">Left <u>i</u>ndent:</div>
<div class="abs" style="left:870px;top:306px;width:11px;height:11px;background:#fff;border:1px solid #5a5a5a"></div><svg class="abs" style="left:870px;top:306px" width="11" height="11"><path d="M2.200 5.500l2.300 2.700 4.300-5.700" stroke="#111" stroke-width="1.700" fill="none"/></svg>
<div class="abs ui" style="left:885px;top:304.5px;line-height:14px;color:#1a1a1a;font-size:10.3px;"><u>W</u>rap text</div>
<div class="abs" style="left:776px;top:319px;width:80px;height:19px;background:#fff;border:1px solid #b9bdc4"></div>
<div class="abs ui" style="left:781px;top:321.5px;line-height:14px;color:#a3a3a3;font-size:10.3px;">0pt</div>
<svg class="abs" style="left:843px;top:322px" width="9" height="13"><path d="M1.500 4.500l3-3 3 3z" fill="#8b8b8b"/><path d="M1.500 8.500l3 3 3-3z" fill="#8b8b8b"/></svg>
<div class="abs" style="left:840px;top:321px;width:1px;height:15px;background:#dedede"></div>
<div class="abs" style="left:870px;top:328px;width:11px;height:11px;background:#f2f2f2;border:1px solid #c4c4c4"></div>
<div class="abs ui" style="left:885px;top:326.5px;line-height:14px;color:#a3a3a3;font-size:10.3px;"><u>M</u>erge cells</div>
<div class="abs ui" style="left:777px;top:345.5px;line-height:14px;color:#1a1a1a;font-size:10.3px;">Text <u>o</u>rientation:</div>
<svg class="abs" style="left:775px;top:364px" width="44" height="44"><circle cx="22" cy="22" r="21" fill="#f4f5f7" stroke="#5c6b80" stroke-width="1"/><path d="M22 22h21" stroke="#333" stroke-width="1.200"/><circle cx="22" cy="22" r="1.500" fill="#333"/></svg>
<div class="abs" style="left:835px;top:371px;width:114px;height:19px;background:#fff;border:1px solid #bcbfc5;border-radius:1px"></div><div class="abs ui" style="left:839px;top:371px;line-height:19px;color:#111;font-size:10.3px">0 degrees</div><div class="abs" style="left:933px;top:372px;width:15px;height:17px;background:linear-gradient(#f4f4f4,#e2e2e2);border:1px solid #b4b4b4"></div><svg class="abs" style="left:936.0px;top:377.5px" width="9" height="6"><path d="M1 1l3.500 3.500L8 1" stroke="#333" stroke-width="1.500" fill="none"/></svg>
<div class="abs" style="left:835px;top:401px;width:11px;height:11px;background:#fff;border:1px solid #5a5a5a"></div>
<div class="abs ui" style="left:850px;top:399.5px;line-height:14px;color:#1a1a1a;font-size:10.3px;"><u>V</u>ertically stacked</div>
<div class="abs" style="left:771px;top:421px;width:187px;height:19px;background:linear-gradient(#e2e2e4,#eeeef0)"></div><svg class="abs" style="left:775px;top:427.0px" width="9" height="9"><rect x=".5" y=".5" width="7" height="7" fill="#fff" stroke="#7b8694"/><path d="M2 4h4" stroke="#333"/></svg><div class="abs ui" style="left:788px;top:424.5px;line-height:14px;font-weight:bold;font-size:10px;color:#222">Cell Appearance</div><svg class="abs" style="left:944px;top:424.5px" width="11" height="9"><rect x=".5" y=".5" width="9" height="7" fill="#eef3fa" stroke="#7f9cc4"/><path d="M2 5.500h1M4.500 5.500h1M7 5.500h1" stroke="#3c5f94"/></svg>
<div class="abs ui" style="left:777px;top:444.0px;line-height:14px;color:#1a1a1a;font-size:10.3px;"><u>C</u>ell background:</div>
<div class="abs" style="left:776px;top:458px;width:83px;height:23px;background:linear-gradient(#fafafb,#f3f4f5);border-radius:1px"></div>
<svg class="abs" style="left:779px;top:462px" width="14" height="14"><path d="M3 6l5-4.500 5 5-5 5.500q-1.500 1-3 0l-2.500-2.500z" fill="#eef2f8" stroke="#34558f" stroke-width="1.200"/><path d="M3.500 6.500l4.500 4.500-2 1.500-3.500-3z" fill="#3f66a8"/><path d="M2 8q-2 2.500-1 4.500 1.500 1 2-1z" fill="#3f66a8"/></svg>
<div class="abs" style="left:796px;top:464px;width:48px;height:10px;background:#d9ead3;border:1px solid #51657e"></div>
<svg class="abs" style="left:850.5px;top:468.5px" width="6" height="4"><path d="M0 0h5l-2.500 3z" fill="#222"/></svg>
<div class="abs ui" style="left:777px;top:491.0px;line-height:14px;color:#1a1a1a;font-size:10.3px;">Cell <u>b</u>order:</div>
<div class="abs" style="left:776px;top:507px;width:55px;height:49px;background:linear-gradient(#fafafb,#f3f4f5);border-radius:1px"></div>
<svg class="abs" style="left:781px;top:512px" width="40" height="40"><path d="M1.500 1.500h34v34h-34zM18.500 1.500v34M1.500 18.500h34" fill="none" stroke="#444" stroke-width="1" stroke-dasharray="1 2"/></svg>
<svg class="abs" style="left:822.5px;top:529.5px" width="6" height="4"><path d="M0 0h5l-2.500 3z" fill="#222"/></svg>
<div class="abs" style="left:841px;top:507px;width:84px;height:24px;background:linear-gradient(#fafafb,#f3f4f5);border-radius:1px"></div>
<div class="abs" style="left:841px;top:535px;width:84px;height:22px;background:linear-gradient(#fafafb,#f3f4f5);border-radius:1px"></div>
<div class="abs" style="left:847px;top:518px;width:62px;height:1px;background:#b9b9b9"></div>
<svg class="abs" style="left:915.5px;top:517.5px" width="6" height="4"><path d="M0 0h5l-2.500 3z" fill="#c4c4c4"/></svg>
<svg class="abs" style="left:844px;top:539px" width="14" height="14"><path d="M10 1l2 2-6 7-3 1 1-3z" fill="#e1e1e1" stroke="#c9c9c9"/><path d="M1 12.500h11" stroke="#d0d0d0" stroke-width="1.500"/></svg>
<div class="abs" style="left:861px;top:541px;width:49px;height:10px;background:#ececec;border:1px solid #d0d0d0"></div>
<svg class="abs" style="left:915.5px;top:545.5px" width="6" height="4"><path d="M0 0h5l-2.500 3z" fill="#c4c4c4"/></svg>
<div class="abs" style="left:777px;top:567px;width:11px;height:11px;background:#fff;border:1px solid #5a5a5a"></div><svg class="abs" style="left:777px;top:567px" width="11" height="11"><path d="M2.200 5.500l2.300 2.700 4.300-5.700" stroke="#111" stroke-width="1.700" fill="none"/></svg>
<div class="abs ui" style="left:792px;top:566.0px;line-height:14px;color:#1a1a1a;font-size:10.3px;">Show cell <u>g</u>rid lines</div>
<div class="abs" style="left:771px;top:590px;width:187px;height:19px;background:linear-gradient(#e2e2e4,#eeeef0)"></div><svg class="abs" style="left:775px;top:596.0px" width="9" height="9"><rect x=".5" y=".5" width="7" height="7" fill="#fff" stroke="#7b8694"/><path d="M2 4h4M4 2v4" stroke="#333"/></svg><div class="abs ui" style="left:788px;top:593.5px;line-height:14px;font-weight:bold;font-size:10px;color:#222">Number Format</div><svg class="abs" style="left:944px;top:593.5px" width="11" height="9"><rect x=".5" y=".5" width="9" height="7" fill="#eef3fa" stroke="#7f9cc4"/><path d="M2 5.500h1M4.500 5.500h1M7 5.500h1" stroke="#3c5f94"/></svg>
<svg class="abs" style="left:970px;top:111px" width="12" height="11"><path d="M1 2h7M1 4.500h7M1 7h5" stroke="#444" stroke-width="1.200"/><path d="M6.500 7.500h5l-2.500 3z" fill="#222"/></svg>
<div class="abs" style="left:962px;top:136px;width:28px;height:29px;background:#f8f9fb;border:1px solid #b4b8bf;border-radius:2px"></div>
<svg class="abs" style="left:966px;top:140px" width="20" height="20"><path d="M1.500 5.500l4.500-2.500 4 2 4-2 4.500 2.500v9.500l-4.500 2.500-4-2-4 2-4.500-2.500z" fill="#e8f4fb"/><path d="M2 6l4-2.200 4 2.200v4.300l-4 2.200-4-2.200z" fill="#3fa0dd" stroke="#2a7fb8" stroke-width=".6"/><path d="M2 6l4 2.200 4-2.200M6 8.200v4.300" stroke="#bfe2f6" stroke-width=".8" fill="none"/><path d="M10 6l4-2.200 4 2.200v4.300l-4 2.200-4-2.200z" fill="#7fce3c" stroke="#4f9a1e" stroke-width=".6"/><path d="M10 6l4 2.200 4-2.200M14 8.200v4.300" stroke="#d6f2b8" stroke-width=".8" fill="none"/><path d="M2 11.500l4-1.500 4 2.200v3.800l-4 2.200-4-2.200z" fill="#2f92cf" stroke="#2a7fb8" stroke-width=".6"/><path d="M10 12.200l4-2.200 4 1.500v4.500l-4 2.200-4-2.200z" fill="#62b92a" stroke="#4f9a1e" stroke-width=".6"/><path d="M6 12.500l4 2 4-2" stroke="#e8f4fb" stroke-width=".8" fill="none"/></svg>
<svg class="abs" style="left:966px;top:171px" width="20" height="20"><path d="M2 18l5-12 4 7 3-4 4 9z" fill="#3a6fc4"/><path d="M3 8l4-6 3 5z" fill="#e8a020"/><path d="M10 4l4-2 2 5-4 1z" fill="#d83a8a"/><path d="M12 10l5-3 1 6z" fill="#4ab04a"/><circle cx="9" cy="11" r="3" fill="#f0f4fa" stroke="#4a5a70"/></svg>
<svg class="abs" style="left:966px;top:201px" width="20" height="20"><rect x="2" y="5" width="13" height="11" fill="#eef3f8" stroke="#7a8898" transform="rotate(-8 8 10)"/><rect x="5" y="4" width="13" height="11" fill="#9fd0f0" stroke="#5a6a7a"/><path d="M5 15l4-5 3 3 2-2 4 4z" fill="#5aa83a"/><path d="M4 17h13" stroke="#c9a040" stroke-width="2"/></svg>
<svg class="abs" style="left:966px;top:231px" width="20" height="20"><circle cx="10" cy="10" r="8.500" fill="#f4c030" stroke="#b07a10" stroke-width="1.500"/><circle cx="10" cy="10" r="6" fill="#f4f8fc" stroke="#8a6a20" stroke-width=".8"/><path d="M14.500 5.500l-3 6-2.500-2.500z" fill="#d8281e"/><path d="M5.500 14.500l3-6 2.500 2.500z" fill="#3a5a90"/></svg>
<svg class="abs" style="left:966px;top:262px" width="20" height="20"><path d="M5 2h9l4 4v12h-13z" fill="#eaf2fb" stroke="#6a8ab8"/><text x="9" y="15" font-size="12" font-style="italic" font-weight="bold" fill="#2a4a80" text-anchor="middle" font-family="Liberation Serif, serif">fx</text></svg>
<div class="abs" style="left:8px;top:631px;width:753px;height:16px;background:#f0f0f0"></div>
<div class="abs" style="left:8px;top:631px;width:512px;height:1px;background:#9a9a9a"></div>
<div class="abs" style="left:8px;top:632px;width:59px;height:15px;background:#e9e9e9"></div>
<svg class="abs" style="left:10.5px;top:635px" width="10" height="9"><path d="M2 1v7M8 1l-4 3.500 4 3.500z" fill="#b9bcc0" stroke="#b9bcc0" stroke-width="1"/></svg>
<svg class="abs" style="left:25.0px;top:635px" width="10" height="9"><path d="M7 1l-4 3.500 4 3.500z" fill="#b9bcc0" stroke="#b9bcc0" stroke-width="1"/></svg>
<svg class="abs" style="left:39.5px;top:635px" width="10" height="9"><path d="M3 1l4 3.500-4 3.500z" fill="#b9bcc0" stroke="#b9bcc0" stroke-width="1"/></svg>
<svg class="abs" style="left:54.0px;top:635px" width="10" height="9"><path d="M8 1v7M2 1l4 3.500-4 3.500z" fill="#b9bcc0" stroke="#b9bcc0" stroke-width="1"/></svg>
<svg class="abs" style="left:64px;top:631px" width="225" height="16" font-family="Liberation Sans, sans-serif" font-size="10" font-weight="bold"><path d="M148 1h63l-6 14h-61z" fill="#ff6a14" stroke="#5a5a5a" stroke-width=".8"/><text x="176" y="12.300" text-anchor="middle" fill="#7a1c00" font-size="9.300">Older Data</text><path d="M64 1h86l-6 14h-86z" fill="#2db82d" stroke="#3a3a3a" stroke-width=".8"/><text x="105" y="12.300" text-anchor="middle" fill="#f4fff4" font-size="9.800">Supporting Data</text><path d="M3.500 0l5.500 13.500h49l6-13.500z" fill="#fff" stroke="#222" stroke-width="1"/><path d="M9 14h49" stroke="#1a1aa8" stroke-width="1.600"/><text x="33.500" y="12" text-anchor="middle" fill="#101040">Summary</text></svg>
<div class="abs" style="left:519px;top:632px;width:4px;height:15px;background:#f6f6f6;border:1px solid #8a8a8a;border-top:none"></div>
<svg class="abs" style="left:527px;top:634px" width="8" height="10"><path d="M6 1.500l-4 3.500 4 3.500" stroke="#444" stroke-width="1.600" fill="none"/></svg>
<div class="abs" style="left:538px;top:632px;width:68px;height:14px;background:#cdcdcd"></div>
<svg class="abs" style="left:732px;top:634px" width="8" height="10"><path d="M2 1.500l4 3.500-4 3.500" stroke="#444" stroke-width="1.600" fill="none"/></svg>
<div class="abs" style="left:744px;top:631px;width:2px;height:15px;background:#111"></div>
<div class="abs" style="left:7px;top:647px;width:986px;height:19px;background:#f0f0f0"></div>
<div class="abs ui" style="left:16px;top:652px;line-height:14px;color:#222;font-size:10px;letter-spacing:-0.3px">Sheet 1 / 3</div>
<div class="abs ui" style="left:193px;top:652px;line-height:14px;color:#222;font-size:10px;letter-spacing:-0.3px">PageStyle_Sheet1</div>
<div class="abs ui" style="left:445px;top:652px;line-height:14px;color:#222;font-size:10px;letter-spacing:-0.3px">STD</div>
<div class="abs ui" style="left:480px;top:652px;line-height:14px;color:#222;font-size:10px;letter-spacing:-0.3px">*</div>
<div class="abs ui" style="left:628px;top:652px;width:80px;text-align:center;line-height:14px;color:#222;font-size:10px;letter-spacing:-0.3px">Sum=1</div>
<div class="abs" style="left:188px;top:650px;width:1px;height:13px;background:#9d9d9d"></div>
<div class="abs" style="left:189px;top:650px;width:1px;height:13px;background:#fff"></div>
<div class="abs" style="left:388px;top:650px;width:1px;height:13px;background:#9d9d9d"></div>
<div class="abs" style="left:389px;top:650px;width:1px;height:13px;background:#fff"></div>
<div class="abs" style="left:434px;top:650px;width:1px;height:13px;background:#9d9d9d"></div>
<div class="abs" style="left:435px;top:650px;width:1px;height:13px;background:#fff"></div>
<div class="abs" style="left:473px;top:650px;width:1px;height:13px;background:#9d9d9d"></div>
<div class="abs" style="left:474px;top:650px;width:1px;height:13px;background:#fff"></div>
<div class="abs" style="left:490px;top:650px;width:1px;height:13px;background:#9d9d9d"></div>
<div class="abs" style="left:491px;top:650px;width:1px;height:13px;background:#fff"></div>
<div class="abs" style="left:515px;top:650px;width:1px;height:13px;background:#9d9d9d"></div>
<div class="abs" style="left:516px;top:650px;width:1px;height:13px;background:#fff"></div>
<div class="abs" style="left:824px;top:650px;width:1px;height:13px;background:#9d9d9d"></div>
<div class="abs" style="left:825px;top:650px;width:1px;height:13px;background:#fff"></div>
<div class="abs" style="left:956px;top:650px;width:1px;height:13px;background:#9d9d9d"></div>
<div class="abs" style="left:957px;top:650px;width:1px;height:13px;background:#fff"></div>
<svg class="abs" style="left:828px;top:650px" width="124" height="14"><path d="M16 7h90" stroke="#9a9a9a" stroke-width="1.200"/><circle cx="6.500" cy="7" r="4.500" fill="#e8eef6" stroke="#5a6c84" stroke-width="1.200"/><path d="M4 7h5" stroke="#3a4a60" stroke-width="1.200"/><circle cx="116" cy="7" r="4.500" fill="#e8eef6" stroke="#5a6c84" stroke-width="1.200"/><path d="M113.500 7h5M116 4.500v5" stroke="#3a4a60" stroke-width="1.200"/><path d="M57.500 3.500h5v5l-2.500 3-2.500-3z" fill="#5a6e88" stroke="#33435a" stroke-width=".8"/></svg>
<div class="abs ui" style="left:961px;top:652px;line-height:14px;color:#222;font-size:10px;letter-spacing:-0.3px">100%</div>
</body></html>
